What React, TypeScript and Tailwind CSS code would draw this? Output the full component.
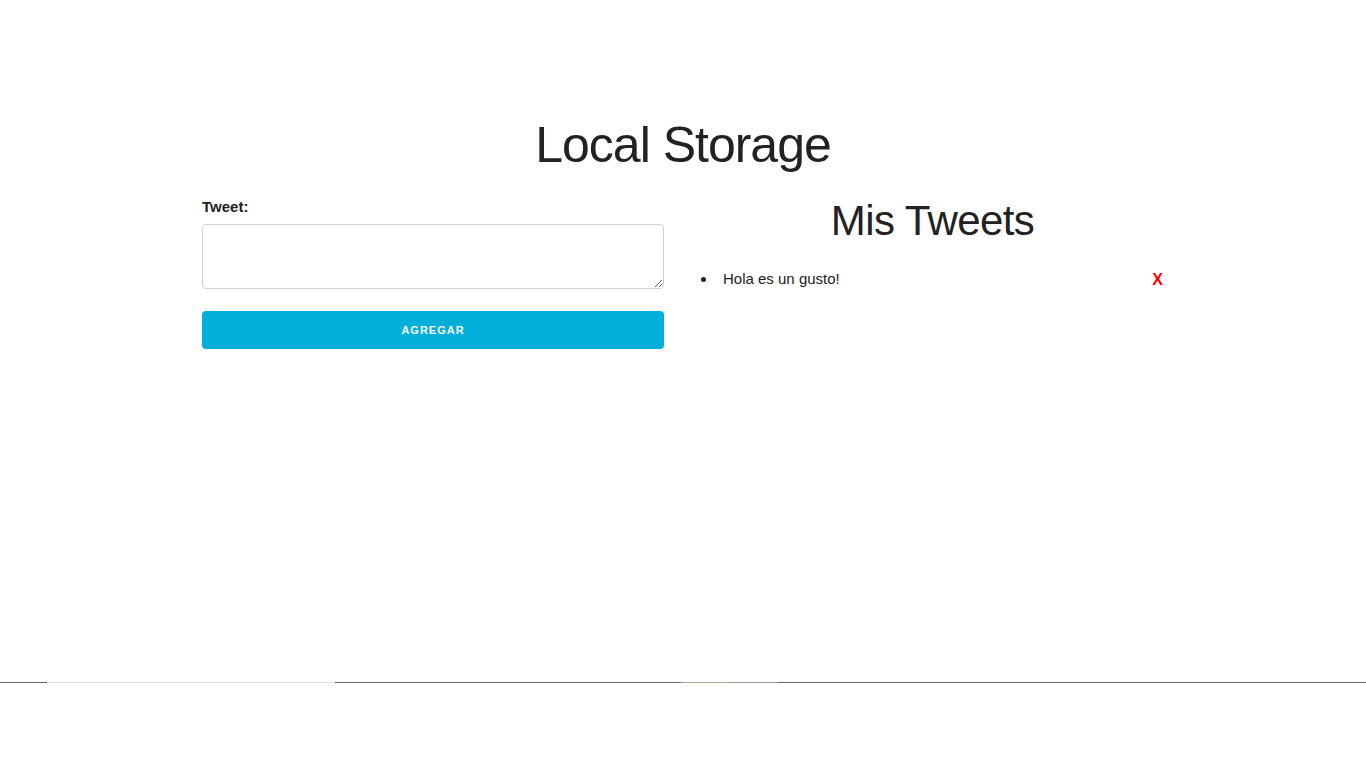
export default function App() {
  return (
    <div className="h-[768px] bg-white flex flex-col text-[#222] font-['Liberation_Sans',Arial,sans-serif] text-[15px] leading-[1.6]">
      <div className="h-[682px] pt-[115px]">
        <div className="w-[962px] mx-auto">
          <h1 className="text-[50px] leading-[1.2] tracking-[-1px] text-center mb-5">Local Storage</h1>
          <div className="flex gap-[37px]">
            <form className="w-[462px]" onSubmit={e => e.preventDefault()}>
              <label className="block font-bold mb-[5px]">Tweet:</label>
              <textarea className="block w-full h-[65px] border border-[#d1d1d1] rounded-[4px] px-[10px] py-[6px] outline-none"></textarea>
              <button className="mt-[22px] w-full h-[38px] pt-[2px] rounded-[4px] bg-[#00afd9] text-white text-[11px] font-bold tracking-[1px] uppercase">
                Agregar
              </button>
            </form>
            <div className="flex-1">
              <h2 className="text-[42px] leading-[1.25] tracking-[-0.6px] text-center mb-[19px]">Mis Tweets</h2>
              <ul className="pr-px">
                <li className="flex items-center">
                  <span className="w-[5px] h-[5px] rounded-full bg-[#222] mr-[17px]"></span>
                  <span className="flex-1">Hola es un gusto!</span>
                  <span className="text-[#ff0000] font-bold text-[16px]">X</span>
                </li>
              </ul>
            </div>
          </div>
        </div>
      </div>
      <div className="flex h-px">
        <div className="w-[47px] bg-[#666]"></div>
        <div className="w-[288px] bg-[#e2e2e2]"></div>
        <div className="w-[346px] bg-[#666]"></div>
        <div className="w-[48px] bg-[#b9a690]"></div>
        <div className="w-[49px] bg-[#999]"></div>
        <div className="flex-1 bg-[#666]"></div>
      </div>
    </div>
  );
}
